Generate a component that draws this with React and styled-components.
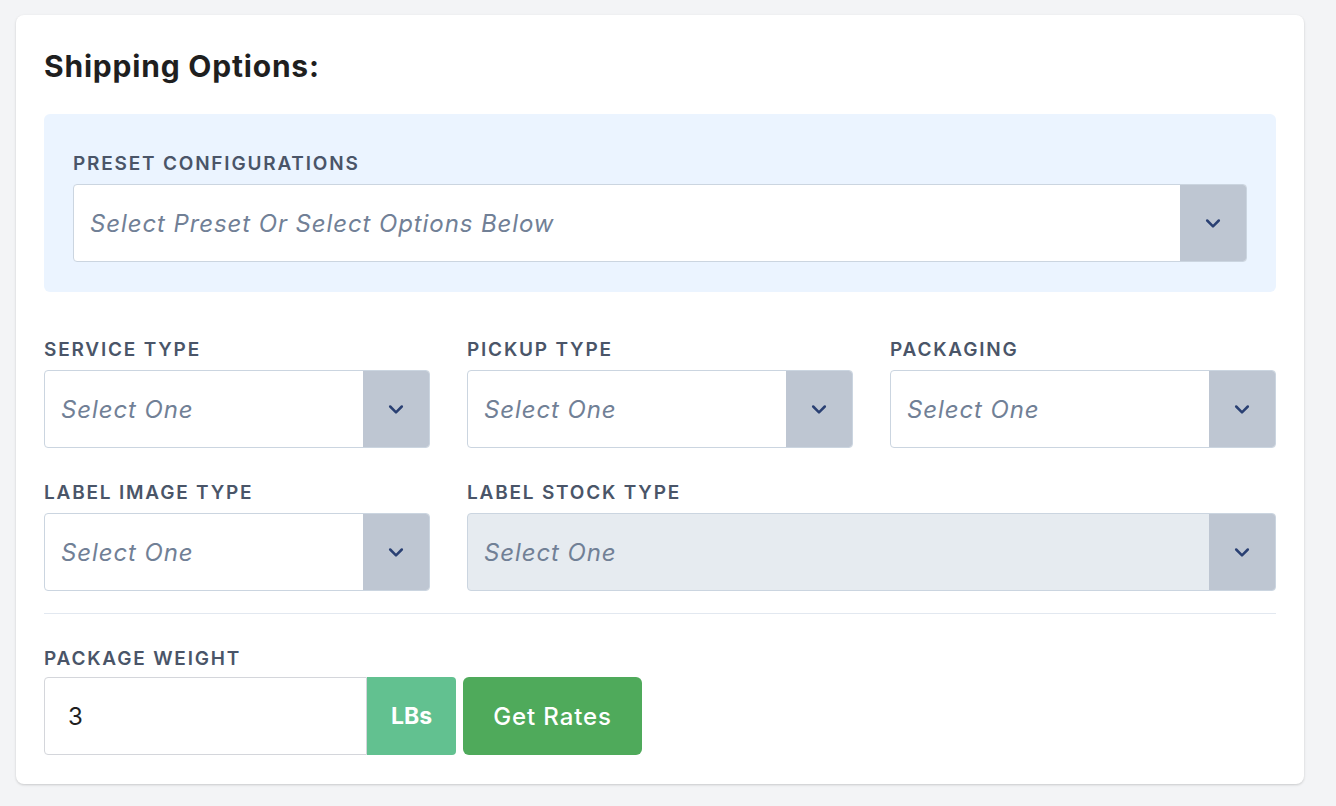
import React from "react";
import styled, { createGlobalStyle } from "styled-components";

const GlobalStyle = createGlobalStyle`
  body {
    margin: 0;
    background: #f3f4f6;
    font-family: Inter, "Noto Sans", sans-serif;
  }
`;

const Page = styled.div`
  padding: 15px 32px 22px 16px;
`;

const Card = styled.div`
  background: #ffffff;
  border-radius: 8px;
  box-shadow: 0 1px 3px rgba(0, 0, 0, 0.12), 0 1px 2px rgba(0, 0, 0, 0.06);
  padding: 28px 28px 29px;
`;

const Title = styled.h2`
  margin: 0 0 25px;
  font-size: 30px;
  line-height: 46px;
  font-weight: 700;
  letter-spacing: 0.8px;
  color: #1f1f1f;
`;

const PresetBox = styled.div`
  background: #ebf4ff;
  border-radius: 6px;
  padding: 38px 29px 30px;
`;

const Label = styled.div`
  font-size: 19px;
  line-height: 24px;
  font-weight: 600;
  letter-spacing: 1.8px;
  text-transform: uppercase;
  color: #4a5568;
  margin-bottom: 8px;
`;

const Grid = styled.div`
  display: grid;
  grid-template-columns: repeat(3, 1fr);
  column-gap: 37px;
  row-gap: 33px;
  margin-top: 46px;
`;

const Field = styled.div`
  grid-column: span ${(p) => p.span || 1};
  min-width: 0;
`;

const SelectBox = styled.div`
  display: flex;
  height: 78px;
  box-sizing: border-box;
  border: 1px solid #cbd5e0;
  border-radius: 4px;
  overflow: hidden;
  background: ${(p) => (p.disabled ? "#e6ebf0" : "#ffffff")};
`;

const Placeholder = styled.div`
  flex: 1;
  display: flex;
  align-items: center;
  padding-left: 16px;
  font-size: 24px;
  font-style: italic;
  color: #718096;
  letter-spacing: 0.9px;
`;

const Arrow = styled.div`
  width: 66px;
  background: #bec6d2;
  display: flex;
  align-items: center;
  justify-content: center;
  color: #2a4073;
`;

const Divider = styled.hr`
  border: 0;
  border-top: 1px solid #e2e8f0;
  margin: 22px 0 33px;
`;

const WeightRow = styled.div`
  display: flex;
  align-items: stretch;
  height: 78px;
  margin-top: -2px;
`;

const WeightInput = styled.div`
  width: 323px;
  box-sizing: border-box;
  border: 1px solid #d4d6db;
  border-radius: 4px 0 0 4px;
  display: flex;
  align-items: center;
  padding-left: 23px;
  font-size: 24px;
  color: #1f1f1f;
`;

const Unit = styled.div`
  width: 89px;
  background: #62c190;
  border-radius: 0 4px 4px 0;
  color: #ffffff;
  font-size: 23px;
  font-weight: 700;
  display: flex;
  align-items: center;
  justify-content: center;
`;

const Button = styled.button`
  margin-left: 7px;
  width: 179px;
  border: none;
  border-radius: 6px;
  background: #4faa5b;
  color: #ffffff;
  font-family: Inter, "Noto Sans", sans-serif;
  font-size: 24px;
  font-weight: 500;
  letter-spacing: 0.9px;
  cursor: pointer;
`;

const Chevron = () => (
  <svg width="20" height="20" viewBox="0 0 24 24" fill="none" stroke="currentColor" strokeWidth="3" strokeLinecap="round" strokeLinejoin="round">
    <polyline points="5 9 12 16 19 9" />
  </svg>
);

const Select = ({ placeholder, disabled }) => (
  <SelectBox disabled={disabled}>
    <Placeholder>{placeholder}</Placeholder>
    <Arrow>
      <Chevron />
    </Arrow>
  </SelectBox>
);

const App = () => (
  <Page>
    <GlobalStyle />
    <Card>
      <Title>Shipping Options:</Title>
      <PresetBox>
        <Label>Preset Configurations</Label>
        <Select placeholder="Select Preset Or Select Options Below" />
      </PresetBox>
      <Grid>
        <Field>
          <Label>Service Type</Label>
          <Select placeholder="Select One" />
        </Field>
        <Field>
          <Label>Pickup Type</Label>
          <Select placeholder="Select One" />
        </Field>
        <Field>
          <Label>Packaging</Label>
          <Select placeholder="Select One" />
        </Field>
        <Field>
          <Label>Label Image Type</Label>
          <Select placeholder="Select One" />
        </Field>
        <Field span={2}>
          <Label>Label Stock Type</Label>
          <Select placeholder="Select One" disabled />
        </Field>
      </Grid>
      <Divider />
      <Label>Package Weight</Label>
      <WeightRow>
        <WeightInput>3</WeightInput>
        <Unit>LBs</Unit>
        <Button>Get Rates</Button>
      </WeightRow>
    </Card>
  </Page>
);

export default App;
